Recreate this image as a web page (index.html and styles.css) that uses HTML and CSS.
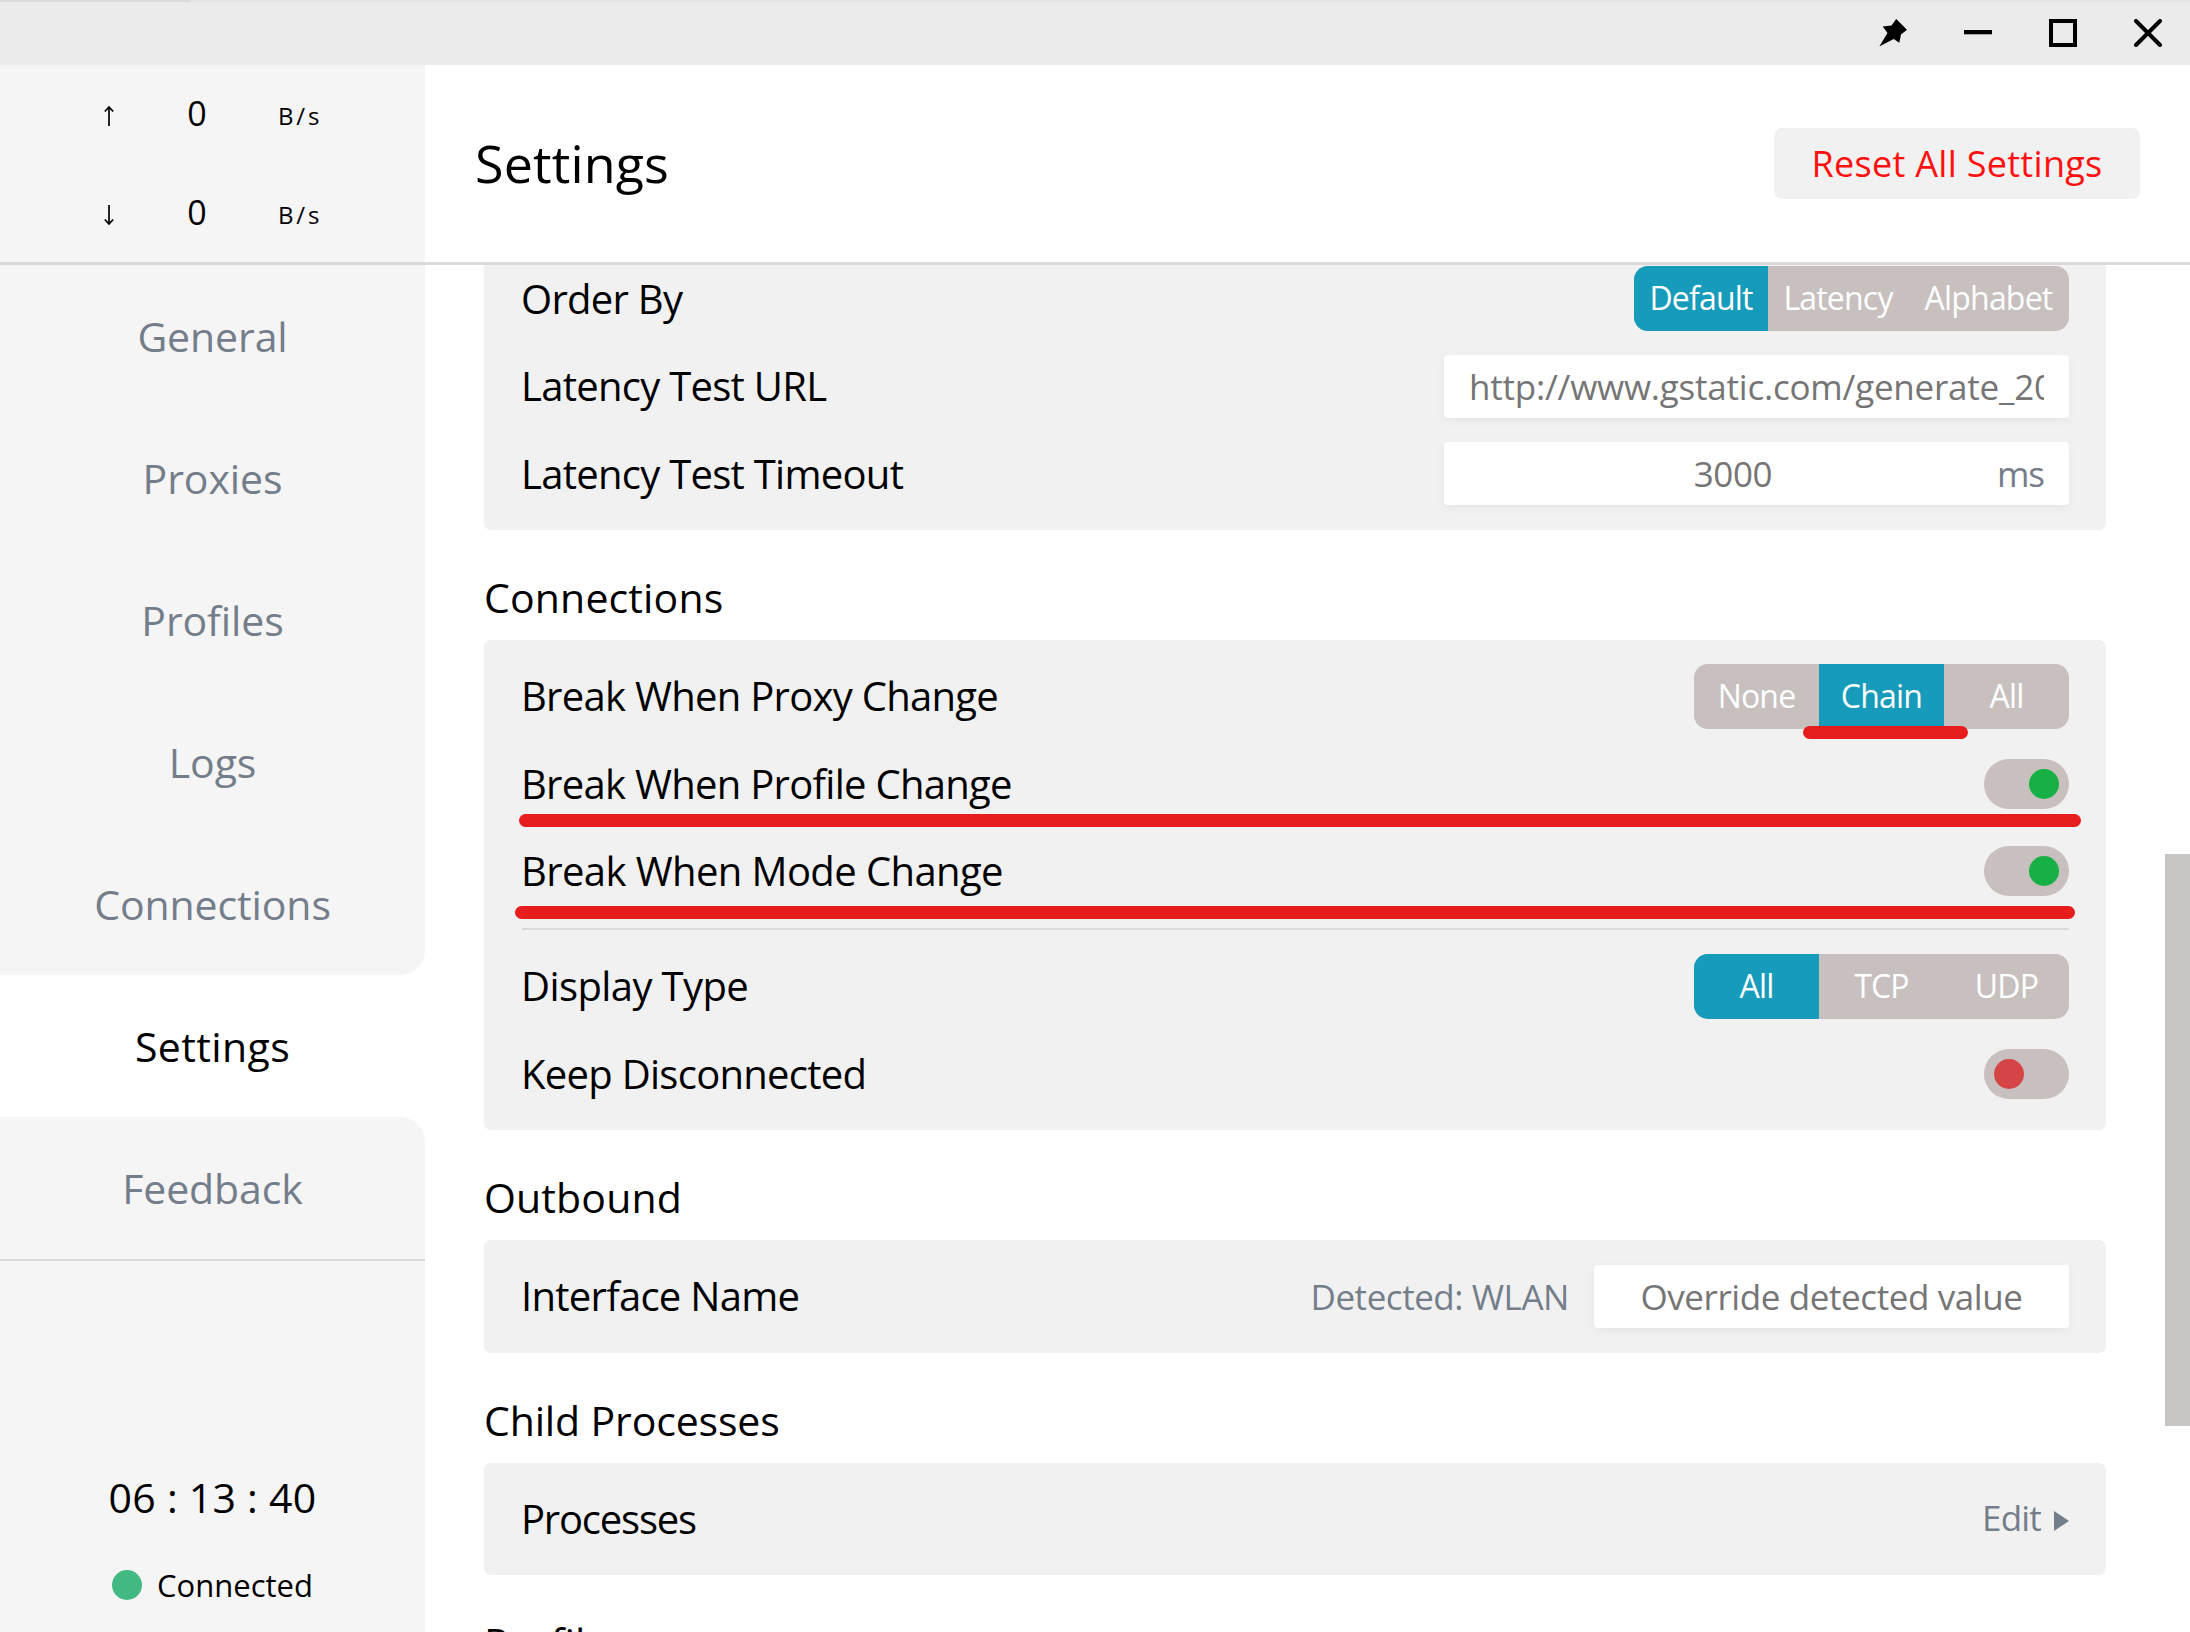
FILE: index.html
```
<!DOCTYPE html>
<html lang="en">
<head>
<meta charset="utf-8">
<title>Settings</title>
<link rel="stylesheet" href="styles.css">
</head>
<body>
<div class="window">
  <div class="titlebar">
    <svg class="win-icon" viewBox="0 0 28 28"><path d="M17.2 0 28 10.8 22 15.5 20.3 23.7 14.7 20 .3 27.5 8.5 14 3.7 7.6 12.5 6.6Z"/></svg>
    <svg class="win-icon" viewBox="0 0 28 28"><path d="M0 11H28V15.300H0Z"/></svg>
    <svg class="win-icon" viewBox="0 0 28 28"><path d="M2 2H26V26H2Z" fill="none" stroke="#000" stroke-width="4"/></svg>
    <svg class="win-icon" viewBox="0 0 28 28"><path d="M2 2 26 26M26 2 2 26" fill="none" stroke="#000" stroke-width="4" stroke-linecap="round"/></svg>
  </div>
  <div class="header">
    <div class="traffic">
      <div class="traffic-row">
        <svg class="arrow" viewBox="0 0 10 20"><path d="M5 20V1M.8 5.500 5 1 9.200 5.500"/></svg>
        <span class="speed">0</span><span class="unit">B/s</span>
      </div>
      <div class="traffic-row">
        <svg class="arrow" viewBox="0 0 10 20"><path d="M5 0V19M.8 14.500 5 19 9.200 14.500"/></svg>
        <span class="speed">0</span><span class="unit">B/s</span>
      </div>
    </div>
    <div class="page-head">
      <h1 class="title">Settings</h1>
      <button class="reset">Reset All Settings</button>
    </div>
  </div>
  <div class="body">
    <div class="sidebar">
      <nav class="nav">
        <a class="nav-item">General</a>
        <a class="nav-item">Proxies</a>
        <a class="nav-item">Profiles</a>
        <a class="nav-item">Logs</a>
        <a class="nav-item before-active">Connections</a>
        <a class="nav-item active">Settings</a>
        <a class="nav-item after-active">Feedback</a>
      </nav>
      <div class="status">
        <div class="timer">06 : 13 : 40</div>
        <div class="connection"><span class="dot"></span>Connected</div>
      </div>
    </div>
    <main class="content">
      <section class="card card-first">
        <div class="row"><span class="label">Order By</span>
          <div class="segments"><span class="seg seg-default on">Default</span><span class="seg seg-latency">Latency</span><span class="seg seg-alphabet">Alphabet</span></div>
        </div>
        <div class="row"><span class="label">Latency Test URL</span>
          <div class="field wide"><span class="field-url">http://www.gstatic.com/generate_204</span></div>
        </div>
        <div class="row"><span class="label">Latency Test Timeout</span>
          <div class="field wide"><span class="field-value">3000</span><span class="suffix">ms</span></div>
        </div>
      </section>

      <h2 class="heading">Connections</h2>
      <section class="card">
        <div class="row"><span class="label">Break When Proxy Change</span>
          <div class="segments"><span class="seg">None</span><span class="seg on">Chain</span><span class="seg">All</span></div>
          <i class="mark mark-chain"></i>
        </div>
        <div class="row"><span class="label">Break When Profile Change</span>
          <span class="toggle checked"></span>
          <i class="mark mark-profile"></i>
        </div>
        <div class="row"><span class="label loose">Break When Mode Change</span>
          <span class="toggle checked"></span>
          <i class="mark mark-mode"></i>
        </div>
        <div class="divider"></div>
        <div class="row"><span class="label loose">Display Type</span>
          <div class="segments"><span class="seg on">All</span><span class="seg">TCP</span><span class="seg">UDP</span></div>
        </div>
        <div class="row"><span class="label">Keep Disconnected</span><span class="toggle"></span></div>
      </section>

      <h2 class="heading">Outbound</h2>
      <section class="card">
        <div class="row"><span class="label">Interface Name</span>
          <div class="outbound"><span class="detected">Detected: WLAN</span><div class="field narrow"><span class="field-value">Override detected value</span></div></div>
        </div>
      </section>

      <h2 class="heading heading-tight">Child Processes</h2>
      <section class="card">
        <div class="row"><span class="label tight">Processes</span>
          <div class="edit"><span class="edit-text">Edit</span><svg class="caret" viewBox="0 0 15 20"><path d="M0 0 15 10 0 20Z"/></svg></div>
        </div>
      </section>

      <h2 class="heading">Profiles</h2>
    </main>
    <div class="scroll-track"><div class="scroll-thumb"></div></div>
  </div>
</div>
</body>
</html>
```
FILE: styles.css
```
* { box-sizing: border-box; }
body { margin: 0; font-family: "Open Sans", "Noto Sans", sans-serif; color: #000; background: #fff; overflow: hidden; }
.window { width: 2190px; height: 1632px; display: flex; flex-direction: column; overflow: hidden; }

.titlebar { height: 65px; flex: none; display: flex; justify-content: flex-end; gap: 57px; padding: 19px 28px 0 0; background: linear-gradient(to right, #dadada 190px, #e4e4e4 190px) top / 100% 2px no-repeat #ebebeb; }
.win-icon { width: 28px; height: 28px; display: block; }

.header { height: 200px; flex: none; display: flex; border-bottom: 3px solid #dadada; }
.traffic { width: 425px; background: #f5f5f5; padding-top: 15px; }
.traffic-row { height: 99px; display: flex; align-items: flex-start; padding-left: 104px; }
.arrow { width: 10px; height: 20px; margin-top: 26px; fill: none; stroke: #000; stroke-width: 1.7; }
.speed { width: 40px; margin-left: 63px; text-align: center; font-size: 34px; line-height: 66px; }
.unit { margin-left: 61px; font-size: 24px; line-height: 72px; letter-spacing: 2.8px; }
.page-head { flex: 1; display: flex; align-items: center; justify-content: space-between; padding: 0 50px; }
.title { margin: 0; font-size: 52px; font-weight: 400; letter-spacing: .15px; line-height: 70px; padding-bottom: 2px; }
.reset { width: 366px; height: 71px; border: 0; border-radius: 8px; background: #f1f1f1; color: #ff1010; font: 36px "Open Sans", sans-serif; letter-spacing: .3px; padding: 0; }

.body { flex: 1; min-height: 0; display: flex; }
.sidebar { width: 425px; flex: none; display: flex; flex-direction: column; }
.nav-item { display: block; height: 142px; line-height: 142px; text-align: center; font-size: 41px; letter-spacing: -.1px; color: #747e8b; background: #f5f5f5; }
.before-active { border-bottom-right-radius: 25px; }
.after-active { border-top-right-radius: 25px; }
.active { background: #fff; color: #000; letter-spacing: .4px; }
.status { flex: 1; background: #f5f5f5; border-top: 2px solid #dadada; padding-top: 206px; }
.timer { text-align: center; font-size: 41px; line-height: 60px; letter-spacing: .25px; }
.connection { display: flex; align-items: center; justify-content: center; gap: 15px; font-size: 31px; line-height: 60px; margin-top: 28px; }
.dot { width: 30px; height: 30px; border-radius: 50%; background: #42b983; }

.content { flex: 1; padding: 0 59px; overflow: hidden; }
.card { background: #f1f1f1; border-radius: 7px; padding: 12.5px 37px 12.5px 38px; }
.card-first { margin-top: -22.5px; }
.row { height: 87.5px; display: flex; align-items: center; justify-content: space-between; position: relative; }
.label { font-size: 40px; letter-spacing: -.72px; line-height: 62px; margin-left: -1px; }
.loose { letter-spacing: -.6px; }
.tight { letter-spacing: -1.2px; }
.heading { margin: 0; height: 110px; padding-top: 24px; font-size: 41px; font-weight: 400; line-height: 86px; letter-spacing: .15px; }
.heading-tight { letter-spacing: -.15px; }
.divider { height: 2px; margin: 12.5px 0 13px; background: #dadada; }

.segments { display: flex; height: 65px; border-radius: 14px; overflow: hidden; background: #c8bfbf; color: #fff; }
.seg { width: 125px; text-align: center; font-size: 32px; font-weight: 500; line-height: 63px; letter-spacing: -.8px; }
.seg-default { width: 134px; }
.seg-latency { width: 140px; }
.seg-alphabet { width: 161px; }
.on { background: #179bbb; }

.toggle { width: 85px; height: 50px; border-radius: 25px; background: #c8bfbf; padding: 10px; display: flex; }
.toggle::before { content: ""; width: 30px; height: 30px; border-radius: 50%; background: #d54545; }
.checked { justify-content: flex-end; }
.checked::before { background: #16b044; }

.field { height: 63px; border-radius: 4px; background: #fff; box-shadow: 0 3px 10px rgba(0, 0, 0, .05); padding: 0 25px; display: flex; align-items: center; font-size: 35px; line-height: 61px; letter-spacing: -.4px; color: #757575; }
.wide { width: 625px; }
.narrow { width: 475px; }
.field-url { flex: 1; overflow: hidden; white-space: nowrap; letter-spacing: -.22px; }
.field-value { flex: 1; text-align: center; white-space: nowrap; }
.suffix { color: #747e8b; letter-spacing: -1px; }
.outbound { display: flex; align-items: center; gap: 25px; }
.detected { font-size: 35px; letter-spacing: -.45px; line-height: 61px; color: #747e8b; }
.edit { display: flex; align-items: center; gap: 13px; color: #747e8b; }
.edit-text { font-size: 35px; line-height: 60px; letter-spacing: -.8px; padding-bottom: 1px; }
.caret { width: 15px; height: 20px; fill: #747e8b; margin-top: 4px; }

/* red pen strokes drawn over the rows */
.mark { position: absolute; height: 13px; border-radius: 6.5px; background: #e71c1c; }
.mark-chain { left: 1281px; width: 165px; top: 73px; }
.mark-profile { left: -3px; width: 1562px; top: 74px; }
.mark-mode { left: -7px; width: 1560px; top: 78.500px; }

.scroll-track { width: 25px; flex: none; padding-top: 589px; }
.scroll-thumb { height: 572px; background: #c8c6c5; }
```
